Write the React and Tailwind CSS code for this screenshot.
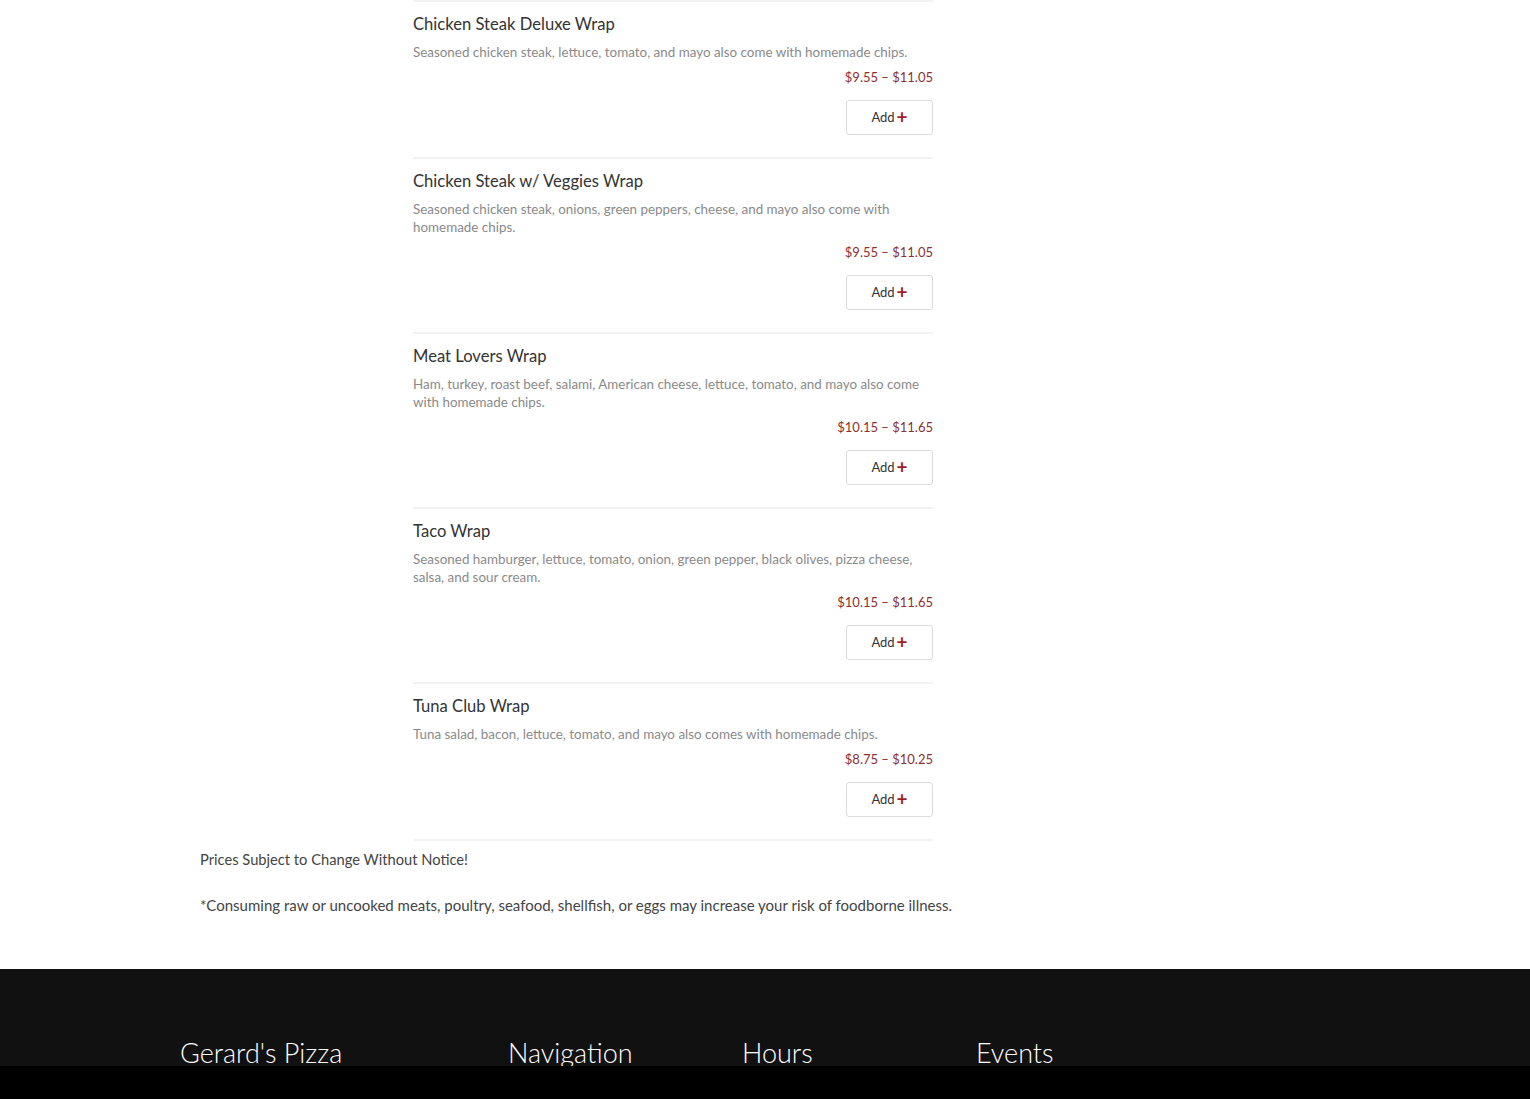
const items = [
  {
    name: 'Chicken Steak Deluxe Wrap',
    desc: 'Seasoned chicken steak, lettuce, tomato, and mayo also come with homemade chips.',
    price: '$9.55 – $11.05',
  },
  {
    name: 'Chicken Steak w/ Veggies Wrap',
    desc: 'Seasoned chicken steak, onions, green peppers, cheese, and mayo also come with homemade chips.',
    price: '$9.55 – $11.05',
  },
  {
    name: 'Meat Lovers Wrap',
    desc: 'Ham, turkey, roast beef, salami, American cheese, lettuce, tomato, and mayo also come with homemade chips.',
    price: '$10.15 – $11.65',
  },
  {
    name: 'Taco Wrap',
    desc: 'Seasoned hamburger, lettuce, tomato, onion, green pepper, black olives, pizza cheese, salsa, and sour cream.',
    price: '$10.15 – $11.65',
  },
  {
    name: 'Tuna Club Wrap',
    desc: 'Tuna salad, bacon, lettuce, tomato, and mayo also comes with homemade chips.',
    price: '$8.75 – $10.25',
  },
];

const MenuItem = ({ item }) => (
  <div className="border-t-2 border-[#f2f2f2] pt-[10px] pb-[22px]">
    <h3 className="text-[16.6px] leading-[24px] text-[#333]">{item.name}</h3>
    <p className="mt-[7px] pr-[10px] text-[13.4px] leading-[18px] text-[#8a8a8a]">{item.desc}</p>
    <div className="mt-[6px] text-right text-[13px] leading-[20px] text-[#8d3030]">{item.price}</div>
    <div className="mt-[13px] flex justify-end">
      <button className="flex h-[35px] w-[87px] items-center justify-center gap-[2px] rounded-[3px] border border-[#dcdcdc] bg-white text-[13px] text-[#333]">
        Add
        <span className="-mt-[2px] text-[19px] font-bold leading-none text-[#a31f1f]">+</span>
      </button>
    </div>
  </div>
);

export default function App() {
  return (
    <div className="bg-white font-['Lato',sans-serif]">
      <div className="mx-auto w-[1170px] px-5">
        <div className="flex">
          <div className="w-[213px] shrink-0" />
          <div className="w-[520px]">
            {items.map((item) => (
              <MenuItem key={item.name} item={item} />
            ))}
            <div className="border-t-2 border-[#f2f2f2]" />
          </div>
        </div>
        <p className="mt-[7px] text-[14.7px] leading-[22px] text-[#444]">Prices Subject to Change Without Notice!</p>
        <p className="mt-[24px] text-[15px] leading-[22px] text-[#444]">
          *Consuming raw or uncooked meats, poultry, seafood, shellfish, or eggs may increase your risk of foodborne illness.
        </p>
      </div>

      <footer className="mt-[53px] h-[130px] bg-[#121112]">
        <div className="mx-auto flex w-[1170px] pt-[66px] text-[27px] font-light leading-[36px] text-white">
          <div className="w-[328px]">Gerard's Pizza</div>
          <div className="w-[234px]">Navigation</div>
          <div className="w-[234px]">Hours</div>
          <div>Events</div>
        </div>
      </footer>

      <div className="fixed bottom-0 left-0 right-0 h-[33px] bg-black" />
    </div>
  );
}
